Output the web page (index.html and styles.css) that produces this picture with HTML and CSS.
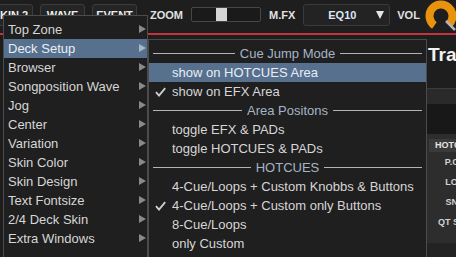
FILE: index.html
```html
<!DOCTYPE html>
<html lang="en">
<head>
<meta charset="utf-8">
<title>Skin Menu</title>
<link rel="stylesheet" href="styles.css">
</head>
<body>
<div class="app">
  <header class="topbar">
    <button class="tb-btn tb-first">SKIN 2</button>
    <button class="tb-btn">WAVE</button>
    <button class="tb-btn">EVENT</button>
    <span class="tb-label tb-zoom">ZOOM</span>
    <div class="slider"><div class="slider-handle"></div></div>
    <span class="tb-label tb-gap">M.FX</span>
    <div class="select"><span class="select-text">EQ10</span><span class="select-arrow"></span></div>
    <span class="tb-label tb-vol">VOL</span>
    <svg class="knob" width="32" height="32" viewBox="0 0 32 32">
      <path d="M9.4 25.4 A11.5 11.5 0 1 1 24.13 24.13" fill="none" stroke="#e8920e" stroke-width="8"/>
      <line x1="21" y1="21" x2="30" y2="30" stroke="#b4b4b4" stroke-width="2.5"/>
    </svg>
  </header>
  <div class="redline"></div>
  <main class="workspace">
    <section class="deck"></section>
    <aside class="side">
      <div class="side-title">Track Info</div>
      <div class="side-strip"></div>
      <div class="side-dark"></div>
      <div class="side-panel">
        <div class="side-tab">HOTCUES</div>
        <div class="side-row">P.CUE</div>
        <div class="side-row">LOOP</div>
        <div class="side-row">SNAP</div>
        <div class="side-row">QT SNAP</div>
      </div>
      <div class="side-bottom"></div>
    </aside>
  </main>

  <nav class="menu main-menu">
    <div class="menu-item"><span>Top Zone</span><span class="arrow"></span></div>
    <div class="menu-item active"><span>Deck Setup</span><span class="arrow"></span></div>
    <div class="menu-item"><span>Browser</span><span class="arrow"></span></div>
    <div class="menu-item"><span>Songposition Wave</span><span class="arrow"></span></div>
    <div class="menu-item"><span>Jog</span><span class="arrow"></span></div>
    <div class="menu-item"><span>Center</span><span class="arrow"></span></div>
    <div class="menu-item"><span>Variation</span><span class="arrow"></span></div>
    <div class="menu-item"><span>Skin Color</span><span class="arrow"></span></div>
    <div class="menu-item"><span>Skin Design</span><span class="arrow"></span></div>
    <div class="menu-item"><span>Text Fontsize</span><span class="arrow"></span></div>
    <div class="menu-item"><span>2/4 Deck Skin</span><span class="arrow"></span></div>
    <div class="menu-item"><span>Extra Windows</span><span class="arrow"></span></div>
  </nav>

  <nav class="menu sub-menu">
    <div class="menu-header"><span class="hline"></span><span class="htext">Cue Jump Mode</span><span class="hline"></span></div>
    <div class="sub-item active"><span class="check"></span><span>show on HOTCUES Area</span></div>
    <div class="sub-item"><span class="check"><svg width="11" height="10" viewBox="0 0 11 10"><path d="M1 5.2 L4 8.6 L10.2 1.2" fill="none" stroke="#d0d0d0" stroke-width="1.8"/></svg></span><span>show on EFX Area</span></div>
    <div class="menu-header"><span class="hline"></span><span class="htext">Area Positons</span><span class="hline"></span></div>
    <div class="sub-item"><span class="check"></span><span>toggle EFX &amp; PADs</span></div>
    <div class="sub-item"><span class="check"></span><span>toggle HOTCUES &amp; PADs</span></div>
    <div class="menu-header"><span class="hline"></span><span class="htext">HOTCUES</span><span class="hline"></span></div>
    <div class="sub-item"><span class="check"></span><span>4-Cue/Loops + Custom Knobbs &amp; Buttons</span></div>
    <div class="sub-item"><span class="check"><svg width="11" height="10" viewBox="0 0 11 10"><path d="M1 5.2 L4 8.6 L10.2 1.2" fill="none" stroke="#d0d0d0" stroke-width="1.8"/></svg></span><span>4-Cue/Loops + Custom only Buttons</span></div>
    <div class="sub-item"><span class="check"></span><span>8-Cue/Loops</span></div>
    <div class="sub-item"><span class="check"></span><span>only Custom</span></div>
    <div class="sub-item"><span class="check"></span><span>No CUE (Custom)</span></div>
  </nav>
</div>
</body>
</html>
```

FILE: styles.css
```css
* { box-sizing: border-box; }

html, body {
  margin: 0;
  padding: 0;
  width: 456px;
  height: 257px;
  overflow: hidden;
  background: #1e1e1e;
  font-family: "Liberation Sans", Arial, sans-serif;
}

.app {
  position: relative;
  width: 456px;
  height: 257px;
  overflow: hidden;
}

/* ---------- top bar ---------- */
.topbar {
  display: flex;
  align-items: center;
  height: 33px;
  padding-bottom: 4px;
  background: #1e1e1e;
}

.tb-btn {
  width: 45px;
  height: 22px;
  margin: 0 0 0 7px;
  padding: 0;
  flex-shrink: 0;
  background: #252525;
  border: 1px solid #3c3c3c;
  border-radius: 3px;
  color: #ececec;
  font: bold 11px "Liberation Sans", Arial, sans-serif;
}

.tb-first { margin-left: -12px; }

.tb-label {
  flex-shrink: 0;
  color: #e2e2e2;
  font-size: 11px;
  font-weight: bold;
  margin-left: 8px;
}

.tb-zoom { margin-left: 13px; }
.tb-vol { margin-left: 7px; }

.slider {
  position: relative;
  flex-shrink: 0;
  width: 70px;
  height: 15px;
  margin-left: 8px;
  background: #1a1a1a;
  border: 1px solid #464646;
  border-radius: 2px;
}

.slider-handle {
  position: absolute;
  left: 24px;
  top: 0;
  width: 11px;
  height: 13px;
  background: #d6d6d6;
}

.select {
  display: flex;
  align-items: center;
  flex-shrink: 0;
  width: 87px;
  height: 22px;
  margin-left: 8px;
  padding: 0 5px 0 24px;
  background: #232323;
  border: 1px solid #3a3a3a;
  border-radius: 3px;
}

.select-text {
  color: #dfe6f5;
  font-size: 11px;
  font-weight: bold;
}

.select-arrow {
  margin-left: auto;
  width: 0;
  height: 0;
  border-left: 4.5px solid transparent;
  border-right: 4.5px solid transparent;
  border-top: 8px solid #e6e6e6;
}

.knob {
  flex-shrink: 0;
  align-self: flex-start;
  margin-left: 5px;
}

.redline {
  height: 2px;
  background: #c2323f;
}

/* ---------- workspace ---------- */
.workspace {
  display: flex;
  height: 222px;
}

.deck {
  width: 427px;
  flex-shrink: 0;
  background: #1d1d1d;
}

.side {
  width: 80px;
  flex-shrink: 0;
  display: flex;
  flex-direction: column;
}

.side-title {
  height: 54px;
  padding: 9px 0 0 1px;
  color: #f2f2f2;
  font-size: 19px;
  font-weight: bold;
  line-height: 22px;
  white-space: nowrap;
  background: #1e1e1e;
  border-bottom: 1px solid #3c3c3c;
}

.side-strip {
  height: 15px;
  background: #2a2a2a;
}

.side-dark {
  height: 30px;
  background: #181818;
}

.side-panel {
  height: 109px;
  padding: 5px 0 0 2px;
  background: #2d2d2d;
}

.side-tab {
  height: 13px;
  padding-left: 6px;
  background: #3a3a3a;
  color: #e4e4e4;
  font-size: 9px;
  font-weight: bold;
  line-height: 13px;
  white-space: nowrap;
}

.side-row {
  width: 58px;
  height: 20px;
  line-height: 20px;
  text-align: center;
  color: #d2d2d2;
  font-size: 9px;
  font-weight: bold;
  white-space: nowrap;
}

.side-bottom {
  flex: 1;
  background: #232323;
}

/* ---------- menus ---------- */
.menu {
  position: absolute;
  background: #1f1f1f;
  border: 1px solid #4c4c4c;
  padding: 4px 0 30px;
  color: #d6d6d6;
  font-size: 13px;
}

.main-menu {
  left: 3px;
  top: 15px;
  width: 145px;
}

.sub-menu {
  left: 148px;
  top: 39px;
  width: 279px;
}

.menu-item {
  display: flex;
  align-items: center;
  height: 19px;
  padding: 0 1px 0 4px;
  white-space: nowrap;
}

.menu-item .arrow {
  margin-left: auto;
  margin-top: -1px;
  width: 0;
  height: 0;
  border-top: 4.5px solid transparent;
  border-bottom: 4.5px solid transparent;
  border-left: 7px solid #8a8a8a;
}

.active {
  background: #57708e;
  color: #e9eef5;
}

.active .arrow { border-left-color: #a9b6c6; }

.menu-header {
  display: flex;
  align-items: center;
  height: 19px;
  padding: 0 4px;
}

.hline {
  flex: 1;
  height: 1px;
  background: #b4b4b4;
}

.htext {
  margin: 0 5px;
  color: #a6b4c6;
  white-space: nowrap;
}

.sub-item {
  display: flex;
  align-items: center;
  height: 19px;
  padding-left: 6px;
  white-space: nowrap;
}

.check {
  display: flex;
  align-items: center;
  width: 17px;
  height: 19px;
}
```
